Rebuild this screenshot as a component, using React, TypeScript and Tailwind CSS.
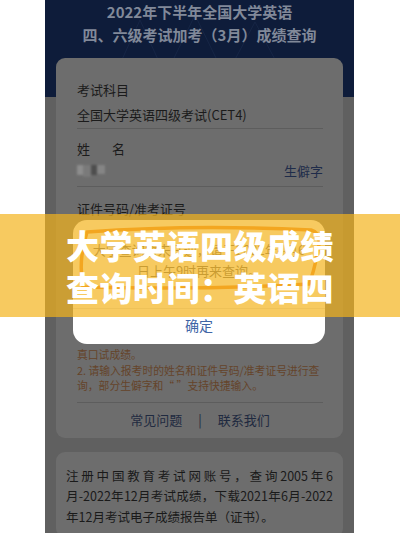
import React from 'react';

const NOTES = ['真口试成绩。', '2. 请输入报考时的姓名和证件号码/准考证号进行查', '询，部分生僻字和“ ”支持快捷输入。'];

const ScoreQueryCover: React.FC = () => {
  return (
    <div className="relative w-[400px] h-[533px] overflow-hidden bg-white font-['Noto_Sans_CJK_SC',sans-serif]">
      {/* Phone screenshot (dimmed by dialog mask) */}
      <div className="ml-[45px] w-[309px] h-full bg-[#606060]">
        {/* Header */}
        <div className="relative h-[97px] bg-[#0e1c3a] text-center">
          <svg className="absolute inset-0" width="309" height="97" viewBox="0 0 309 97">
            <g stroke="#1a2a4a" strokeWidth="1" fill="none" opacity="0.7">
              <path d="M60 97 L95 20 L130 97" />
              <path d="M110 97 L150 15 L190 97" />
              <path d="M170 97 L210 22 L250 97" />
            </g>
          </svg>
          <div className="relative text-[15px] leading-[23px] font-bold text-[#818999]">
            <div>2022年下半年全国大学英语</div>
            <div>四、六级考试加考（3月）成绩查询</div>
          </div>
        </div>

        {/* Query form card */}
        <div className="mx-[11px] -mt-[39px] relative rounded-[9px] bg-[#6d6d6d] pl-[21px] pr-[20px] pt-[22px] pb-[8px] text-[#1b1b1b]">
          <div className="text-[13px] leading-[20px]">考试科目</div>
          <div className="mt-[5px] text-[13px] leading-[20px]">全国大学英语四级考试(CET4)</div>
          <div className="mt-[3px] h-px bg-[#5d5d5d]" />

          <div className="mt-[10px] text-[13px] leading-[20px] flex gap-[22px]">
            <span>姓</span>
            <span>名</span>
          </div>
          <div className="mt-[2px] h-[20px] flex items-center justify-between">
            <div className="flex blur-[1px]">
              <div className="w-[6px] h-[10px] bg-[#8d8d8d]" />
              <div className="w-[8px] h-[12px] bg-[#7a7a7a]" />
              <div className="w-[6px] h-[10px] bg-[#4e4e4e]" />
              <div className="w-[8px] h-[9px] bg-[#858585]" />
            </div>
            <span className="text-[13px] text-[#1f2c4a]">生僻字</span>
          </div>
          <div className="mt-[5px] h-px bg-[#5d5d5d]" />

          <div className="mt-[12px] text-[13px] leading-[20px]">证件号码/准考证号</div>
          <div className="h-[128px]" />

          <div className="text-[10.8px] leading-[15.5px] text-[#65442a] whitespace-nowrap">
            {NOTES.map((line) => (
              <div key={line}>{line}</div>
            ))}
          </div>
          <div className="mt-[8px] h-px bg-[#5d5d5d]" />
          <div className="pt-[7px] text-[13px] leading-[20px] text-[#1f2a40] flex justify-center gap-[16px]">
            <span>常见问题</span>
            <span>|</span>
            <span>联系我们</span>
          </div>
        </div>

        {/* Account tip card */}
        <div className="mx-[11px] mt-[14px] rounded-[9px] bg-[#6d6d6d] px-[10px] pt-[14px] pb-[10px] text-[12.5px] leading-[20.5px] text-[#1a1a1a] whitespace-nowrap">
          <div className="text-justify [text-align-last:justify]">注册中国教育考试网账号，查询2005年6</div>
          <div className="text-justify [text-align-last:justify]">月-2022年12月考试成绩，下载2021年6月-2022</div>
          <div>年12月考试电子成绩报告单（证书）。</div>
        </div>
      </div>

      {/* Dialog */}
      <div className="absolute left-[73px] top-[220px] w-[252px] h-[124px] rounded-[14px] bg-white">
        <svg className="absolute inset-0" width="252" height="124" viewBox="0 0 252 124">
          <path
            d="M14 12 Q120 4 238 10 Q249 13 245 30 Q241 52 236 64 Q130 70 10 67 Q5 40 14 12 Z"
            fill="none"
            stroke="#f0882a"
            strokeWidth="3.5"
            strokeLinejoin="round"
          />
        </svg>
        <div className="relative pt-[19px] text-center text-[13px] leading-[21px] text-[#666]">
          <div>大学查询暂未开通，请于2022年4月6</div>
          <div>日上午9时再来查询。</div>
        </div>
        <div className="absolute left-0 right-0 top-[88px] h-px bg-[#e5e5e5]" />
        <div className="absolute left-0 right-0 top-[94px] text-center text-[14px] leading-[22px] text-[#3f66a6]">确定</div>
      </div>

      {/* Title banner */}
      <div className="absolute left-0 right-0 top-[214px] h-[103px] bg-[rgba(244,179,28,0.7)] flex flex-col items-center justify-center">
        <div className="text-[33px] leading-[42px] font-black text-white tracking-[0.5px]">大学英语四级成绩</div>
        <div className="text-[33px] leading-[42px] font-black text-white tracking-[0.5px]">查询时间：英语四</div>
      </div>
    </div>
  );
};

export default function App() {
  return <ScoreQueryCover />;
}
